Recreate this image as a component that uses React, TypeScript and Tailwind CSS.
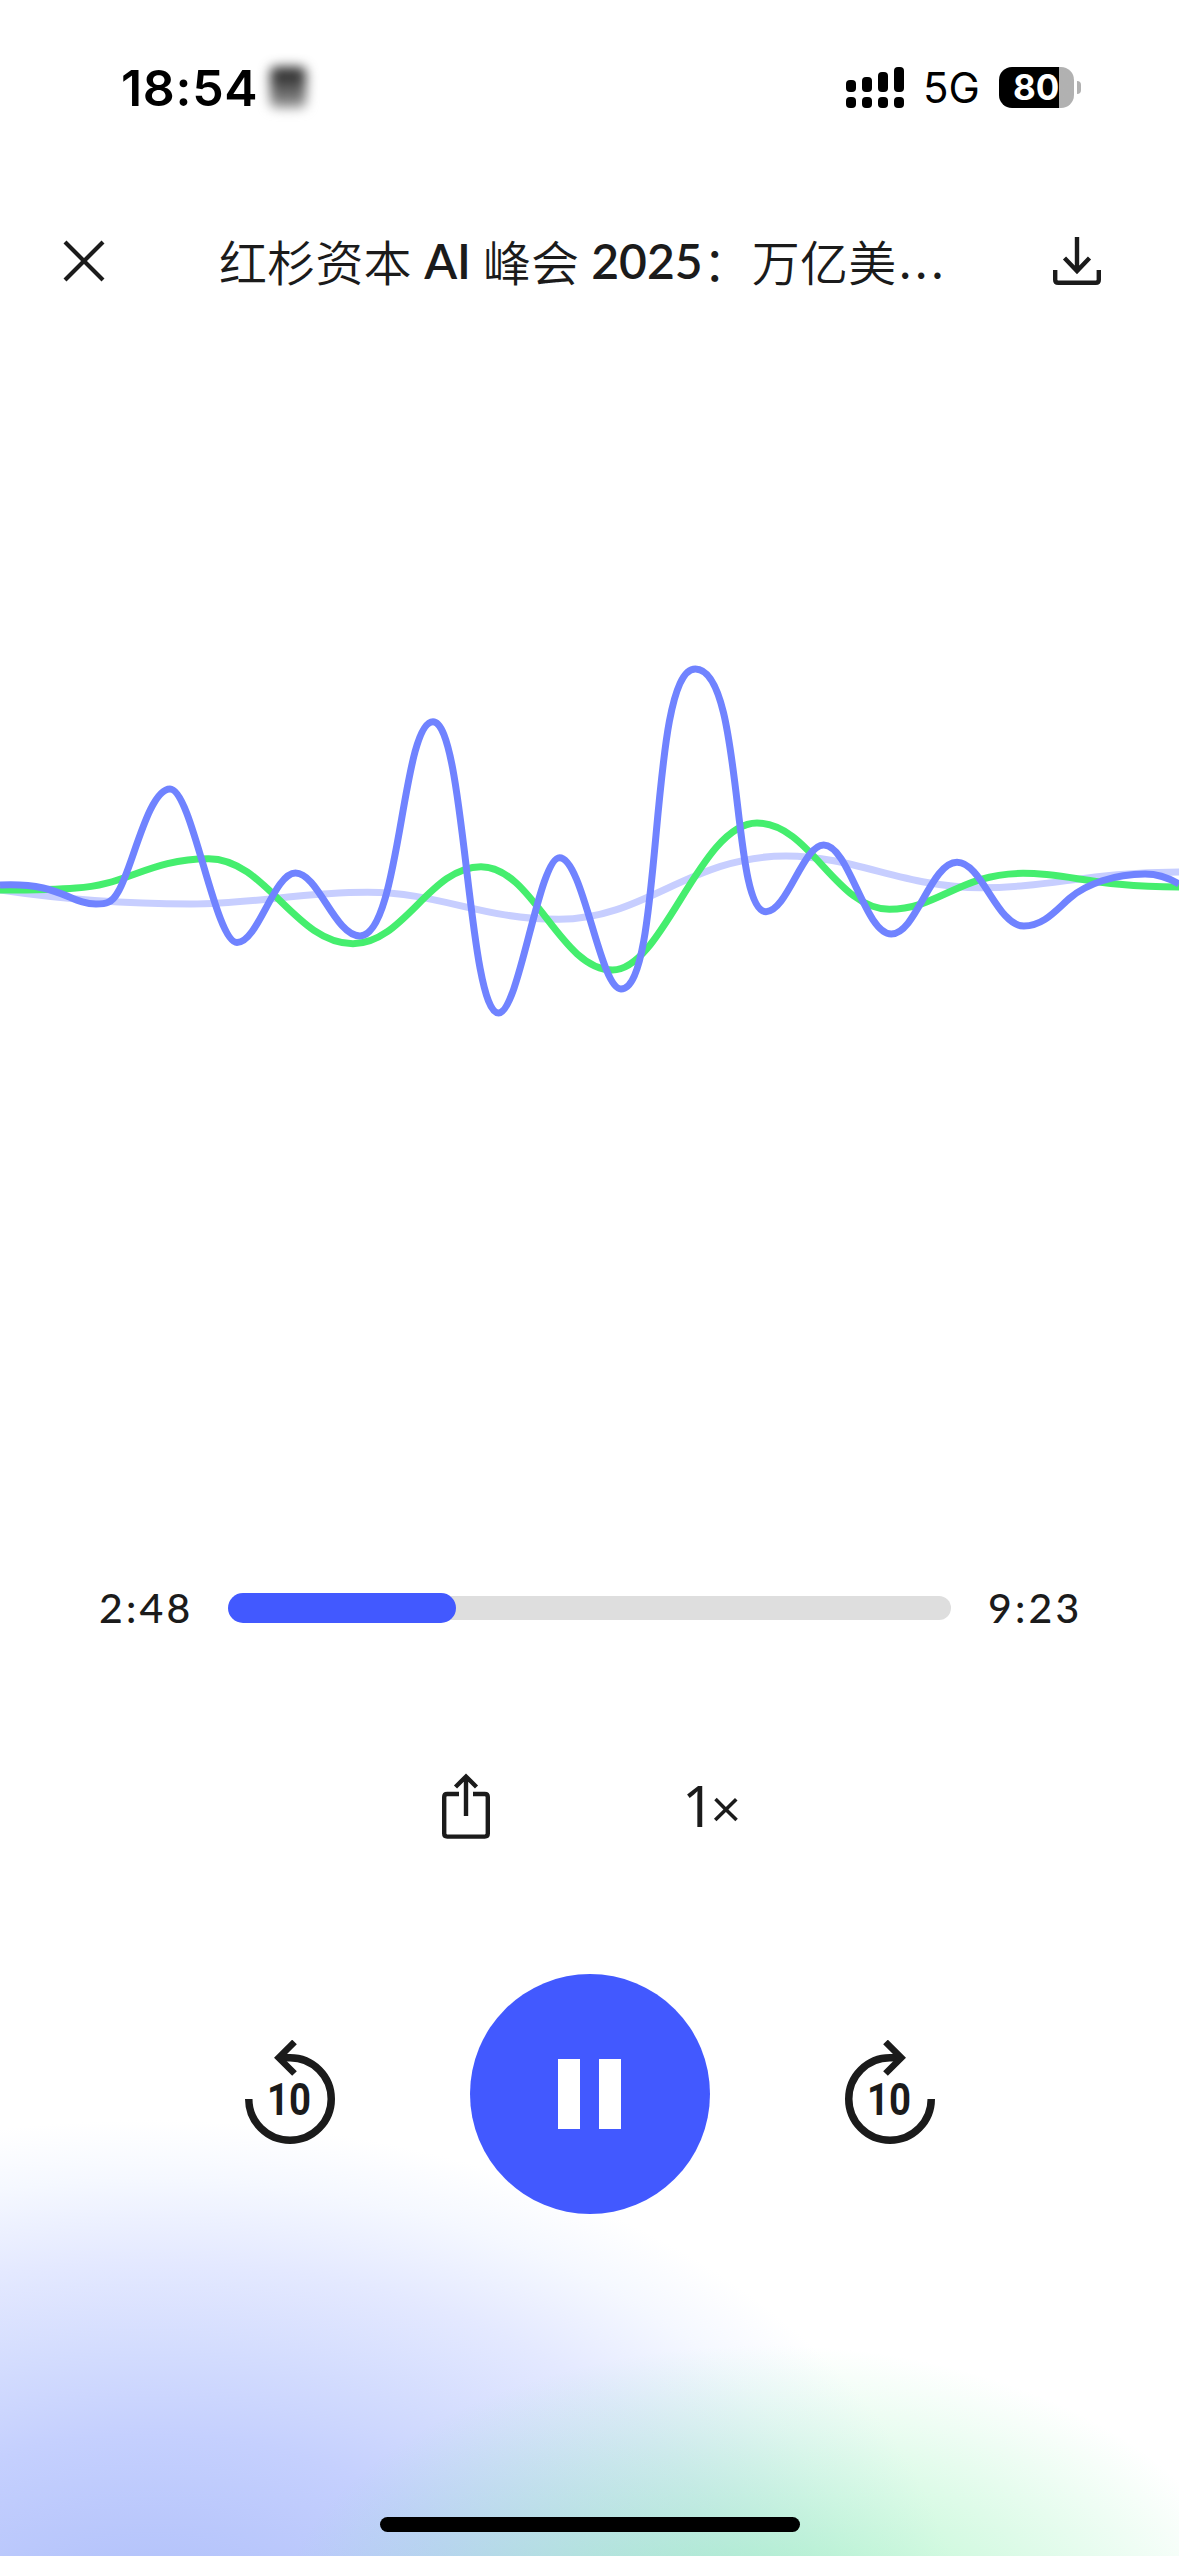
import React from 'react';

const ELAPSED = 2 * 60 + 48;
const DURATION = 9 * 60 + 23;

const formatTime = (seconds: number) =>
  `${Math.floor(seconds / 60)}:${String(seconds % 60).padStart(2, '0')}`;

const signalBars = ['h-[12px]', 'h-[15px]', 'h-[20px]', 'h-[25px]'];

const StatusBar: React.FC = () => (
  <div className="flex h-[177px] items-start pl-[121px] pr-[98px] pt-[62px] font-['Inter',sans-serif] text-black">
    <span className="w-[148px] whitespace-nowrap text-[50px] font-semibold leading-[52px] tracking-[0.7px]">
      18:54
    </span>
    <div className="ml-[1px] mt-[5px] h-[41px] w-[36px] rounded-[6px] bg-linear-to-b from-[#1c1c1c] to-[#a0a0a0] blur-[6px]" />

    <div className="ml-auto flex items-center pt-[4px]">
      <div className="flex h-[41px] items-end gap-[6px]">
        {signalBars.map(height => (
          <div key={height} className="flex flex-col gap-[5px]">
            <div className={`w-[10px] rounded-[4px] bg-black ${height}`} />
            <div className="h-[11px] w-[10px] rounded-[4px] bg-black" />
          </div>
        ))}
      </div>
      <span className="ml-[19px] w-[76px] whitespace-nowrap text-[42px] leading-[43px]">5G</span>
      <div className="flex h-[41px] w-[75px] items-center overflow-hidden rounded-[13px] bg-linear-to-r from-black from-80% to-[#b1b1b1] to-80% pl-[14px]">
        <span className="text-[35px] font-bold leading-[41px] text-white">80</span>
      </div>
      <div className="ml-[3px] h-[13px] w-[4px] rounded-r-full bg-[#b1b1b1]" />
    </div>
  </div>
);

const CloseIcon: React.FC = () => (
  <svg width="42" height="42" viewBox="0 0 42 42" fill="none" stroke="currentColor" strokeWidth="4.2">
    <path d="M2 2L40 40M40 2L2 40" />
  </svg>
);

const DownloadIcon: React.FC = () => (
  <svg width="48" height="48" viewBox="0 0 48 48" fill="none" stroke="currentColor" strokeWidth="4.4">
    <path d="M24 0V34M11.5 21L24 34L36.5 21" />
    <path d="M2.2 33V42.8Q2.2 45.8 5.2 45.8H42.8Q45.8 45.8 45.8 42.8V33" />
  </svg>
);

const ShareIcon: React.FC = () => (
  <svg width="48" height="66" viewBox="0 0 48 66" fill="none" stroke="currentColor" strokeWidth="4.4">
    <path d="M17 21H5.2Q2.2 21 2.2 24V60.6Q2.2 63.6 5.2 63.6H42.8Q45.8 63.6 45.8 60.6V24Q45.8 21 42.8 21H31" />
    <path d="M24 3.5V43M13.5 14L24 3.5L34.5 14" />
  </svg>
);

// Ten second skip, mirrored for the forward direction.
const SkipIcon: React.FC<{ forward?: boolean }> = ({ forward = false }) => (
  <svg width="90" height="108" viewBox="0 0 90 108" fill="none" stroke="currentColor">
    <g transform={forward ? 'translate(90 0) scale(-1 1)' : undefined}>
      <path d="M3.75 59A41.25 41.25 0 1 0 45 17.75H35" strokeWidth="7.5" />
      <path d="M49.5 2L33.7 17.75L49.5 33.5" strokeWidth="6.6" />
    </g>
    <text
      x="22"
      y="75"
      textLength="44"
      lengthAdjust="spacingAndGlyphs"
      fill="currentColor"
      stroke="none"
      className="font-['Roboto',sans-serif] text-[45px] font-bold"
    >
      10
    </text>
  </svg>
);

const Header: React.FC = () => (
  <header className="flex h-[168px] items-center pl-[63px] pr-[78px]">
    <button aria-label="Close">
      <CloseIcon />
    </button>
    <h1 className="ml-[114px] flex w-[730px] items-center whitespace-pre pb-[2px] font-['Lato','Noto_Sans_CJK_SC',sans-serif] text-[48px] font-semibold leading-[60px]">
      <span className="font-['Noto_Sans_CJK_SC',sans-serif] font-[350] tracking-[0.2px]">红杉资本</span>
      <span className="pl-[2px] pt-[2px]"> AI </span>
      <span className="font-['Noto_Sans_CJK_SC',sans-serif] font-[350] tracking-[0.2px]">峰会</span>
      <span className="pt-[2px]"> 2025</span>
      <span className="font-['Noto_Sans_CJK_SC',sans-serif] font-[350] tracking-[0.2px]">：</span>
      <span className="pl-[1px] font-['Noto_Sans_CJK_SC',sans-serif] font-[350] tracking-[0.2px]">
        万亿美
      </span>
      <span className="pl-[3px] pt-[2px] font-medium tracking-[4.8px]">...</span>
    </h1>
    <button aria-label="Download" className="ml-auto">
      <DownloadIcon />
    </button>
  </header>
);

const Waveform: React.FC = () => (
  <svg
    className="block h-[1155px] w-[1179px]"
    viewBox="0 345 1179 1155"
    fill="none"
    strokeWidth="7"
  >
    <path
      stroke="#c7ceff"
      d="M0 890C60 899 120 904 191 904C255 904 300 892.3 367.5 892.3C440 892.3 480 919.3 559 919.3C645 919.3 690 856 786 856C855 856 905 887.7 981 887.7C1050 887.7 1090 872 1179 872"
    />
    <path
      stroke="#45ee6e"
      d="M0 890C30 890 60 889.5 76 888C125 886 150 858.7 208.6 858.7C266 858.7 295 943.7 353 943.7C404 943.7 430 866.7 481 866.7C533 866.7 560 970 612.5 970C663 970 700 823 757 823C810 823 836 909.3 889.4 909.3C938 909.3 960 873.3 1023 873.3C1070 873.3 1095 887 1179 887"
    />
    <path
      stroke="#7083ff"
      d="M0 885C60 882 70 904 96 904C106 904 112 903 118 892C132 870 148 789 170 789C192 789 215 942.5 237 942.5C258 942.5 274 873 295.5 873C318 873 335 936 360 936C400 936 402 721.7 433 721.7C465 721.7 468 1013 498.6 1013C519 1013 539 857.7 559.5 857.7C583 857.7 600 989 621 989C664 989 648 669 695.4 669C744 669 731 911.7 766 911.7C787 911.7 803 845 823.7 845C849 845 865 934 891.3 934C916 934 931 862.3 957 862.3C982 862.3 997 926 1023.8 926C1044 926 1057 909 1070 898C1086 884 1115 874 1145 874C1158 874 1169 878 1179 884"
    />
  </svg>
);

const Progress: React.FC = () => {
  const percent = (ELAPSED / DURATION) * 100;

  return (
    <div className="flex h-[216px] items-center pl-[99px] font-['Lato',sans-serif] text-[41px] font-medium leading-[48px]">
      <span className="w-[129px] shrink-0 tracking-[3.2px]">{formatTime(ELAPSED)}</span>
      <div className="flex h-[30px] w-[723px] shrink-0 items-center">
        <div
          className="z-10 h-[30px] rounded-full bg-[#4259ff]"
          style={{ width: `${percent + 1.75}%` }}
        />
        <div className="-ml-[24px] h-[24px] flex-1 rounded-r-full bg-[#dedede]" />
      </div>
      <span className="ml-[37px] tracking-[3.2px]">{formatTime(DURATION)}</span>
    </div>
  );
};

const Controls: React.FC = () => (
  <>
    <div className="flex h-[180px] items-center pl-[442px]">
      <button aria-label="Share">
        <ShareIcon />
      </button>
      <button className="ml-[192px] flex items-baseline font-['Noto_Sans',sans-serif] leading-[66px]">
        <span className="text-[57px] tracking-[-4px]">1</span>
        <span className="font-['Lato',sans-serif] text-[53px]">×</span>
      </button>
    </div>

    <div className="flex h-[396px] items-center justify-center gap-[135px]">
      <button aria-label="Back 10 seconds">
        <SkipIcon />
      </button>
      <button
        aria-label="Pause"
        className="flex size-[240px] items-center justify-center gap-[19px] rounded-full bg-[#4259ff]"
      >
        <div className="h-[70px] w-[22px] bg-white" />
        <div className="h-[70px] w-[22px] bg-white" />
      </button>
      <button aria-label="Forward 10 seconds">
        <SkipIcon forward />
      </button>
    </div>
  </>
);

export default function App() {
  return (
    <div className="flex h-[2556px] w-[1179px] flex-col overflow-hidden bg-white bg-[radial-gradient(495px_300px_at_765px_2645px,rgba(115,238,160,0.62),rgba(115,238,160,0)),radial-gradient(815px_540px_at_150px_2660px,#a9bafa_0%,#b5c4fb_18%,#c5d0fe_42%,#d3dcfe_57%,#e4e9ff_74%,#f5f8ff_89%,#ffffff_100%)] text-[#1b1b1b]">
      <StatusBar />
      <Header />
      <Waveform />
      <Progress />
      <Controls />
      <div className="mb-6 mt-auto h-[15px] w-[420px] self-center rounded-full bg-black" />
    </div>
  );
}
